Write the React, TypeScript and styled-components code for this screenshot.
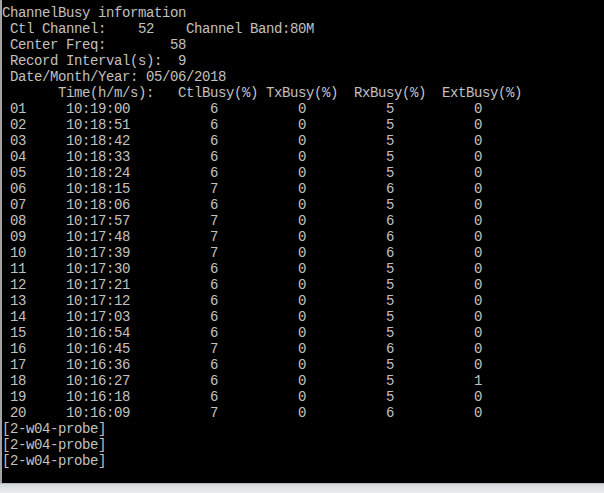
import React from "react";
import styled, { createGlobalStyle } from "styled-components";

const Global = createGlobalStyle`
  html, body { margin: 0; padding: 0; background: #e6e8ea; }
  #root { width: 604px; height: 493px; overflow: hidden; }
`;

const Window = styled.div`
  display: flex;
  flex-direction: column;
  width: 604px;
  height: 493px;
`;

const Console = styled.pre`
  flex: 1;
  margin: 0;
  padding: 5px 0 0 0;
  background: #000;
  border-left: 2px solid #a3a3a3;
  color: #c0c0c0;
  font-family: "Liberation Mono", "DejaVu Sans Mono", monospace;
  font-size: 14px;
  letter-spacing: -0.4px;
  line-height: 16px;
  white-space: pre;
  overflow: hidden;
`;

const BottomStrip = styled.div`
  height: 9px;
  border-top: 1px solid #b8bcc0;
  background: linear-gradient(#d3d7db, #eceef0);
`;

type Row = { t: string; ctl: number; tx: number; rx: number; ext: number };

const rows: Row[] = [
  { t: "10:19:00", ctl: 6, tx: 0, rx: 5, ext: 0 },
  { t: "10:18:51", ctl: 6, tx: 0, rx: 5, ext: 0 },
  { t: "10:18:42", ctl: 6, tx: 0, rx: 5, ext: 0 },
  { t: "10:18:33", ctl: 6, tx: 0, rx: 5, ext: 0 },
  { t: "10:18:24", ctl: 6, tx: 0, rx: 5, ext: 0 },
  { t: "10:18:15", ctl: 7, tx: 0, rx: 6, ext: 0 },
  { t: "10:18:06", ctl: 6, tx: 0, rx: 5, ext: 0 },
  { t: "10:17:57", ctl: 7, tx: 0, rx: 6, ext: 0 },
  { t: "10:17:48", ctl: 7, tx: 0, rx: 6, ext: 0 },
  { t: "10:17:39", ctl: 7, tx: 0, rx: 6, ext: 0 },
  { t: "10:17:30", ctl: 6, tx: 0, rx: 5, ext: 0 },
  { t: "10:17:21", ctl: 6, tx: 0, rx: 5, ext: 0 },
  { t: "10:17:12", ctl: 6, tx: 0, rx: 5, ext: 0 },
  { t: "10:17:03", ctl: 6, tx: 0, rx: 5, ext: 0 },
  { t: "10:16:54", ctl: 6, tx: 0, rx: 5, ext: 0 },
  { t: "10:16:45", ctl: 7, tx: 0, rx: 6, ext: 0 },
  { t: "10:16:36", ctl: 6, tx: 0, rx: 5, ext: 0 },
  { t: "10:16:27", ctl: 6, tx: 0, rx: 5, ext: 1 },
  { t: "10:16:18", ctl: 6, tx: 0, rx: 5, ext: 0 },
  { t: "10:16:09", ctl: 7, tx: 0, rx: 6, ext: 0 },
];

const sp = (n: number) => " ".repeat(n);

const header = [
  "ChannelBusy information",
  " Ctl Channel:    52    Channel Band:80M",
  " Center Freq:        58",
  " Record Interval(s):  9",
  " Date/Month/Year: 05/06/2018",
  sp(7) + "Time(h/m/s):   CtlBusy(%) TxBusy(%)  RxBusy(%)  ExtBusy(%)",
];

const dataLines = rows.map(
  (r, i) =>
    " " +
    String(i + 1).padStart(2, "0") +
    sp(5) +
    r.t +
    sp(10) +
    r.ctl +
    sp(10) +
    r.tx +
    sp(10) +
    r.rx +
    sp(10) +
    r.ext
);

const footer = ["[2-w04-probe]", "[2-w04-probe]", "[2-w04-probe]"];

export default function App() {
  const text = [...header, ...dataLines, ...footer].join("\n");
  return (
    <>
      <Global />
      <Window>
        <Console>{text}</Console>
        <BottomStrip />
      </Window>
    </>
  );
}
